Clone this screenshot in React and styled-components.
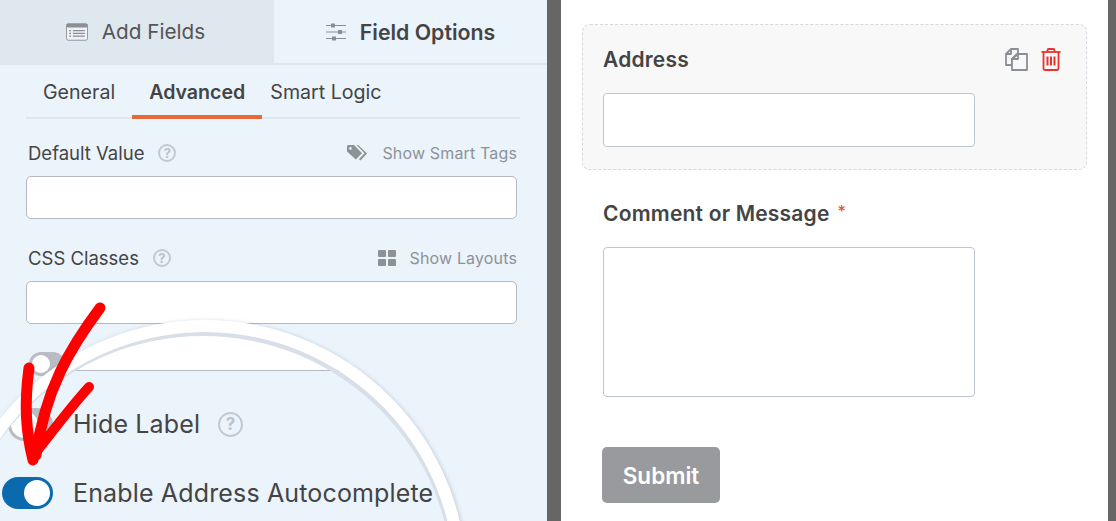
import React from 'react';
import styled, { createGlobalStyle } from 'styled-components';

const Global = createGlobalStyle`
  html, body { margin: 0; padding: 0; background: #fff; }
  * { box-sizing: border-box; }
  body { font-family: Inter, "Liberation Sans", sans-serif; color: #444; }
`;

const Page = styled.div`
  width: 1116px;
  height: 521px;
  display: flex;
  overflow: hidden;
`;

const Sidebar = styled.aside`
  position: relative;
  width: 547px;
  flex: none;
  background: #ebf3fb;
  overflow: hidden;
`;

const Divider = styled.div`
  width: ${p => p.$w}px;
  flex: none;
  background: #666;
`;

const Tabs = styled.div`
  display: flex;
  height: 65px;
  border-bottom: 2px solid #dfe6ee;
`;

const Tab = styled.div`
  width: ${p => p.$width}px;
  flex: none;
  display: flex;
  align-items: center;
  justify-content: center;
  gap: 14px;
  padding-right: ${p => (p.$active ? 0 : 3)}px;
  font-size: ${p => (p.$active ? 21.3 : 20.7)}px;
  font-weight: ${p => (p.$active ? 600 : 400)};
  background: ${p => (p.$active ? 'transparent' : '#dfe7ef')};
  color: ${p => (p.$active ? '#444' : '#555')};
`;

const SubTabs = styled.div`
  display: flex;
  height: 54px;
  margin: 0 27px 0 26px;
  border-bottom: 2px solid #dfe6ee;
`;

const SubTab = styled.div`
  height: 54px;
  padding: 0 ${p => p.$pad}px;
  display: flex;
  align-items: center;
  font-size: 19.6px;
  font-weight: ${p => (p.$active ? 600 : 400)};
  border-top: 4px solid transparent;
  border-bottom: 4px solid ${p => (p.$active ? '#e8683a' : 'transparent')};
  color: #444;
`;

const Fields = styled.div`
  padding: 22px 30px 0 26px;
  display: flex;
  flex-direction: column;
`;

const FieldHead = styled.div`
  display: flex;
  align-items: center;
  justify-content: space-between;
  height: 24px;
  margin-bottom: 11px;
`;

const Label = styled.div`
  display: flex;
  align-items: center;
  gap: 14px;
  font-size: 18.5px;
  padding-left: 2px;
  color: #444;
`;

const Help = styled.span`
  width: ${p => p.$size || 18}px;
  height: ${p => p.$size || 18}px;
  flex: none;
  border-radius: 50%;
  border: 2px solid #c3c9d0;
  color: #bcc2c9;
  font-size: ${p => (p.$size ? 17 : 13)}px;
  font-weight: 700;
  display: flex;
  align-items: center;
  justify-content: center;
`;

const Smart = styled.div`
  display: flex;
  align-items: center;
  gap: 14px;
  font-size: 16px;
  letter-spacing: 0.15px;
  color: #8d9299;
`;

const Input = styled.div`
  height: 43px;
  background: #fff;
  border: 1.5px solid #b4b9c3;
  border-radius: 5px;
  margin-bottom: 27px;
`;

const Lens = styled.div`
  position: absolute;
  left: -57px;
  top: 320px;
  width: 524px;
  height: 524px;
  border-radius: 50%;
  background: #ebf3fb;
  border: 12px solid #fff;
  overflow: hidden;
  box-shadow: 1px 1px 4px rgba(150, 160, 172, 0.55);

  &::after {
    content: '';
    position: absolute;
    inset: 0;
    border-radius: 50%;
    box-shadow: inset -2px 4px 0 #d8dfe8;
  }
`;

const LensInput = styled.div`
  height: 39px;
  background: #fff;
  border-bottom: 1.5px solid #b4b9c3;
`;

const Toggle = styled.div`
  position: absolute;
  left: ${p => p.$left}px;
  top: ${p => p.$top}px;
  width: ${p => p.$w}px;
  height: ${p => p.$h}px;
  border-radius: ${p => p.$h / 2}px;
  background: ${p => p.$bg};
  display: flex;
  align-items: center;
  justify-content: ${p => (p.$on ? 'flex-end' : 'flex-start')};
  padding: 3px;
`;

const Knob = styled.div`
  height: 100%;
  aspect-ratio: 1;
  border-radius: 50%;
  background: #fff;
`;

const LensRow = styled.div`
  position: absolute;
  left: 118px;
  top: ${p => p.$top}px;
  display: flex;
  align-items: center;
  gap: 18px;
  font-size: 25px;
  letter-spacing: 0.15px;
  color: #444;
  white-space: nowrap;
`;

const Arrow = styled.svg`
  position: absolute;
  left: 0;
  top: 290px;
`;

const Form = styled.main`
  flex: 1;
  padding: 24px 21px 0 21px;
  background: #fff;
`;

const Card = styled.section`
  height: 146px;
  background: #f8f8f8;
  border: 1.5px dashed #d4d9e0;
  border-radius: 8px;
  padding: 21px 25px 0 20px;
`;

const CardHead = styled.div`
  display: flex;
  align-items: center;
  justify-content: space-between;
  height: 26px;
  margin-bottom: 21px;
`;

const FieldTitle = styled.div`
  display: flex;
  align-items: flex-start;
  gap: 8px;
  font-size: 21px;
  letter-spacing: 0.2px;
  font-weight: 600;
  color: #444;
`;

const Star = styled.span`
  color: #e8552f;
  font-size: 16px;
  font-weight: 500;
`;

const Actions = styled.div`
  display: flex;
  gap: 13px;
  align-items: center;
`;

const FormInput = styled.div`
  width: 372px;
  height: ${p => p.$h}px;
  background: #fff;
  border: 1.5px solid #c0c5d2;
  border-radius: 4px;
`;

const MessageField = styled.div`
  padding: 31px 0 0 21px;
`;

const MessageTitle = styled(FieldTitle)`
  height: 26px;
  margin-bottom: 20px;
`;

const Submit = styled.button`
  display: block;
  margin: 50px 0 0 -1px;
  width: 118px;
  height: 56px;
  border: none;
  border-radius: 5px;
  background: #999a9d;
  color: #fff;
  font: 600 22.5px Inter, "Liberation Sans", sans-serif;
`;

const ListIcon = () => (
  <svg width="22" height="18" viewBox="0 0 24 19">
    <rect x="0.5" y="0.5" width="23" height="18" rx="2" fill="#eef1f5" stroke="#8a8f96" />
    <rect x="0.5" y="0.5" width="23" height="4" rx="1.5" fill="#8a8f96" />
    <path d="M3.5 8h2M7.5 8h13M3.5 11h2M7.5 11h13M3.5 14h2M7.5 14h13" stroke="#8a8f96" strokeWidth="1.4" />
  </svg>
);

const SlidersIcon = () => (
  <svg width="20" height="18" viewBox="0 0 20 18">
    <path d="M0 2.5h20M0 9h20M0 15.5h20" stroke="#8a8f96" strokeWidth="1.2" />
    <rect x="5" y="0.5" width="4" height="4" fill="#8a8f96" />
    <rect x="12" y="7" width="4" height="4" fill="#8a8f96" />
    <rect x="6" y="13.5" width="4" height="4" fill="#8a8f96" />
  </svg>
);

const TagIcon = () => (
  <svg width="21" height="17" viewBox="0 0 21 17">
    <path d="M0 1.5C0 .7.7 0 1.5 0H7l8 8.2-6.2 6.4L0 6.5z" fill="#8d9299" />
    <path d="M9.5 0h1.6l9 8.4-6.6 7.2-1.6-1.3 5.6-6.1z" fill="#8d9299" />
    <circle cx="3.4" cy="3.4" r="1.3" fill="#ebf3fb" />
  </svg>
);

const GridIcon = () => (
  <svg width="18" height="16" viewBox="0 0 18 16" fill="#8d9299">
    <rect width="8" height="7" rx="1" />
    <rect x="10" width="8" height="7" rx="1" />
    <rect y="9" width="8" height="7" rx="1" />
    <rect x="10" y="9" width="8" height="7" rx="1" />
  </svg>
);

const CopyIcon = () => (
  <svg width="23" height="23" viewBox="0 0 23 23" fill="none" stroke="#8a8f96" strokeWidth="1.8" strokeLinejoin="round">
    <path d="M6 1h7v5h-1L7 11v6H1V6z" />
    <path d="M1 6h5V1" />
    <path d="M13 6h9v16H7V11z" fill="#f8f8f8" />
    <path d="M7 11h6V6" />
  </svg>
);

const TrashIcon = () => (
  <svg width="20" height="23" viewBox="0 0 20 23" fill="none" stroke="#e8322a" strokeWidth="1.8">
    <path d="M0.5 4h19" />
    <path d="M6.5 4V2.2C6.5 1.4 7.1 1 7.8 1h4.4c.7 0 1.3.4 1.3 1.2V4" />
    <path d="M2.5 4v16.5c0 .9.6 1.5 1.5 1.5h12c.9 0 1.5-.6 1.5-1.5V4" />
    <path d="M6.5 8.5v9M10 8.5v9M13.5 8.5v9" strokeWidth="2" />
  </svg>
);

export default function App() {
  return (
    <Page>
      <Global />
      <Sidebar>
        <Tabs>
          <Tab $width={274}><ListIcon />Add Fields</Tab>
          <Tab $width={273} $active><SlidersIcon />Field Options</Tab>
        </Tabs>
        <SubTabs>
          <SubTab $pad={17}>General</SubTab>
          <SubTab $pad={17} $active>Advanced</SubTab>
          <SubTab $pad={8}>Smart Logic</SubTab>
        </SubTabs>
        <Fields>
          <FieldHead>
            <Label>Default Value <Help>?</Help></Label>
            <Smart><TagIcon />Show Smart Tags</Smart>
          </FieldHead>
          <Input />
          <FieldHead>
            <Label>CSS Classes <Help>?</Help></Label>
            <Smart><GridIcon />Show Layouts</Smart>
          </FieldHead>
          <Input />
        </Fields>
        <Toggle $left={29} $top={352} $w={36} $h={24} $bg="#b9bcc2"><Knob /></Toggle>
        <Lens>
          <LensInput />
          <Toggle $left={53} $top={76} $w={45} $h={33} $bg="#b9bcc2"><Knob /></Toggle>
          <LensRow $top={77}>Hide Label <Help $size={25}>?</Help></LensRow>
          <Toggle $left={47} $top={145} $w={51} $h={32} $bg="#0b69ae" $on><Knob /></Toggle>
          <LensRow $top={146}>Enable Address Autocomplete</LensRow>
        </Lens>
        <Arrow width="110" height="190" viewBox="0 0 110 190" fill="none" stroke="#ff0000" strokeLinecap="round" strokeLinejoin="round">
          <path d="M100 18C70 58 45 100 36 165" strokeWidth="11" />
          <path d="M29 78C24 115 26 142 33 170" strokeWidth="11" />
          <path d="M89 97C68 120 50 145 33 166" strokeWidth="10" />
        </Arrow>
      </Sidebar>
      <Divider $w={14} />
      <Form>
        <Card>
          <CardHead>
            <FieldTitle>Address</FieldTitle>
            <Actions><CopyIcon /><TrashIcon /></Actions>
          </CardHead>
          <FormInput $h={54} />
        </Card>
        <MessageField>
          <MessageTitle>Comment or Message <Star>*</Star></MessageTitle>
          <FormInput $h={150} />
          <Submit>Submit</Submit>
        </MessageField>
      </Form>
      <Divider $w={8} />
    </Page>
  );
}
